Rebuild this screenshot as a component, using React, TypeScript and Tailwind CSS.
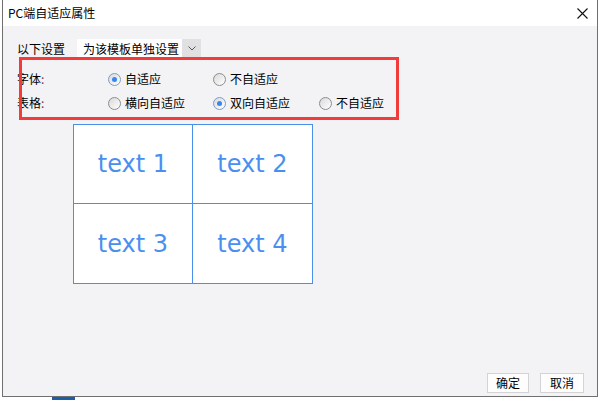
const CJK = "font-['Microsoft_YaHei','Noto_Sans_CJK_SC',sans-serif]";

function Radio({ checked, label }: { checked?: boolean; label: string }) {
  return (
    <div className="flex items-center gap-[4px]">
      <span
        className={`flex h-[13px] w-[13px] items-center justify-center rounded-full border bg-gradient-to-br from-[#d9d9d9] to-white ${
          checked ? "border-[#7d9cc6]" : "border-[#8c8c8c]"
        }`}
      >
        {checked && <span className="h-[5px] w-[5px] rounded-full bg-[#3a86ef]" />}
      </span>
      <span className="text-[12px] leading-[16px] text-black">{label}</span>
    </div>
  );
}

function Cell({ text }: { text: string }) {
  return (
    <div className="flex items-center justify-center border-[#4a90e8] bg-white font-['DejaVu_Sans',sans-serif] text-[24px] text-[#4a8ff0]">
      {text}
    </div>
  );
}

export default function App() {
  return (
    <div className={`relative h-[400px] w-[600px] bg-white ${CJK}`}>
      <div className="ml-[2px] flex h-[397px] w-[596px] flex-col border-x border-b border-[#707070]">
        {/* title bar */}
        <div className="flex h-[26px] items-center justify-between bg-white pl-[5px] pr-[9px]">
          <span className="text-[12px] leading-[16px] text-black">PC端自适应属性</span>
          <svg width="11" height="11" viewBox="0 0 11 11">
            <path d="M0.5 0.5 L10.5 10.5 M10.5 0.5 L0.5 10.5" stroke="#111" strokeWidth="1.1" />
          </svg>
        </div>

        {/* body */}
        <div className="relative flex flex-1 flex-col bg-[#f3f3f5] pl-[14px]">
          <div className="mt-[13px] flex h-[19px] items-center gap-[12px]">
            <span className="text-[12px] leading-[16px] text-black">以下设置</span>
            <div className="flex h-[19px] w-[124px] items-center bg-white pl-[6px]">
              <span className="flex-1 text-[12px] leading-[16px] text-black">为该模板单独设置</span>
              <span className="flex h-full w-[19px] items-center justify-center bg-[#e1e1e3]">
                <svg width="8" height="5" viewBox="0 0 8 5">
                  <path d="M0.5 0.5 L4 4 L7.5 0.5" stroke="#555" fill="none" strokeWidth="1" />
                </svg>
              </span>
            </div>
          </div>

          <div className="mt-[11px] flex h-[20px] items-center">
            <span className="w-[91px] text-[12px] leading-[16px] text-black">
              字体<span className="text-[#7a2f4a]">:</span>
            </span>
            <div className="w-[105px]">
              <Radio checked label="自适应" />
            </div>
            <Radio label="不自适应" />
          </div>

          <div className="mt-[4px] flex h-[20px] items-center">
            <span className="w-[91px] text-[12px] leading-[16px] text-black">
              表格<span className="text-[#7a2f4a]">:</span>
            </span>
            <div className="w-[105px]">
              <Radio label="横向自适应" />
            </div>
            <div className="w-[106px]">
              <Radio checked label="双向自适应" />
            </div>
            <Radio label="不自适应" />
          </div>

          <div className="ml-[56px] mt-[11px] grid h-[160px] w-[240px] grid-cols-2 grid-rows-2 border border-[#4a90e8] [&>div:nth-child(odd)]:border-r [&>div:nth-child(-n+2)]:border-b">
            <Cell text="text 1" />
            <Cell text="text 2" />
            <Cell text="text 3" />
            <Cell text="text 4" />
          </div>

          <div className="mb-[3px] mr-[13px] mt-auto flex justify-end gap-[11px]">
            <button className="h-[20px] w-[42px] border border-[#d4d4d4] bg-[#fdfdfd] text-[12px] leading-[16px] text-black">
              确定
            </button>
            <button className="h-[20px] w-[44px] border border-[#d4d4d4] bg-[#fdfdfd] text-[12px] leading-[16px] text-black">
              取消
            </button>
          </div>

          {/* annotation box */}
          <div className="pointer-events-none absolute left-[16px] top-[31px] h-[63px] w-[380px] border-[3px] border-[#f23b3b]" />
        </div>
      </div>
      <div className="absolute left-[52px] top-[397px] h-[3px] w-[23px] bg-[#1a5fa8]" />
    </div>
  );
}
